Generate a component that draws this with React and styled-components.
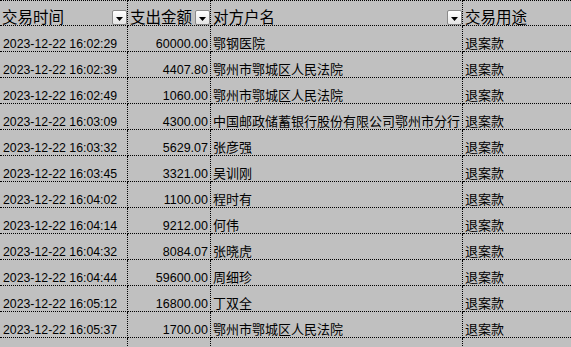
import React from "react";
import styled, {createGlobalStyle} from "styled-components";

const rows = [
  ["2023-12-22 16:02:29", "60000.00", "鄂钢医院", "退案款"],
  ["2023-12-22 16:02:39", "4407.80", "鄂州市鄂城区人民法院", "退案款"],
  ["2023-12-22 16:02:49", "1060.00", "鄂州市鄂城区人民法院", "退案款"],
  ["2023-12-22 16:03:09", "4300.00", "中国邮政储蓄银行股份有限公司鄂州市分行", "退案款"],
  ["2023-12-22 16:03:32", "5629.07", "张彦强", "退案款"],
  ["2023-12-22 16:03:45", "3321.00", "吴训刚", "退案款"],
  ["2023-12-22 16:04:02", "1100.00", "程时有", "退案款"],
  ["2023-12-22 16:04:14", "9212.00", "何伟", "退案款"],
  ["2023-12-22 16:04:32", "8084.07", "张晓虎", "退案款"],
  ["2023-12-22 16:04:44", "59600.00", "周细珍", "退案款"],
  ["2023-12-22 16:05:12", "16800.00", "丁双全", "退案款"],
  ["2023-12-22 16:05:37", "1700.00", "鄂州市鄂城区人民法院", "退案款"],
  ["", "", "", ""],
];

const headers = [
  {title: "交易时间", filter: true},
  {title: "支出金额", filter: true},
  {title: "对方户名", filter: true},
  {title: "交易用途", filter: false},
];

// font per column: digits are smaller than the CJK text
const columns = [
  {size: "12.3px", align: "flex-start"},
  {size: "12.5px", align: "flex-end"},
  {size: "13px", align: "flex-start", cjk: true},
  {size: "13px", align: "flex-start", cjk: true},
];

const FilterIcon = () => (
  <svg width="7" height="4" viewBox="0 0 7 4">
    <polygon points="0,0 7,0 3.5,4" fill="#000"/>
  </svg>
);

export default function App() {
  return (
    <>
      <GlobalStyle/>
      <Sheet>
        {headers.map((h, i) => (
          <HeaderCell key={i} $last={i === 3}>
            <HeaderText>{h.title}</HeaderText>
            {h.filter && (
              <FilterButton>
                <FilterIcon/>
              </FilterButton>
            )}
          </HeaderCell>
        ))}
        {rows.map((row, r) =>
          row.map((value, c) => (
            <Cell
              key={r + "-" + c}
              $size={columns[c].size}
              $align={columns[c].align}
              $cjk={columns[c].cjk}
              $last={c === 3}
            >
              {value}
            </Cell>
          ))
        )}
      </Sheet>
    </>
  );
}

const GlobalStyle = createGlobalStyle`
  html, body {
    margin: 0;
    padding: 0;
    background: #c0c0c0;
    overflow: hidden;
  }
  * {
    box-sizing: border-box;
  }
`;

const Sheet = styled.div`
  display: grid;
  grid-template-columns: 128px 83px 252px 1fr;
  width: 571px;
  background: #c0c0c0;
  color: #000;
  font-family: "Liberation Sans", "Noto Sans CJK SC", sans-serif;
`;

const HeaderCell = styled.div`
  display: flex;
  align-items: flex-end;
  height: 26px;
  padding-left: 2px;
  border-top: 1px dotted #000;
  border-bottom: 1px dotted #000;
  border-right: ${(p) => (p.$last ? "none" : "1px dotted #000")};
`;

const HeaderText = styled.span`
  font-family: "Noto Sans CJK SC", sans-serif;
  font-size: 15.5px;
  line-height: 16px;
  padding-bottom: 1px;
  white-space: nowrap;
`;

const FilterButton = styled.div`
  margin-left: auto;
  width: 15px;
  height: 15px;
  display: flex;
  align-items: center;
  justify-content: center;
  padding-top: 2px;
  border: 1px solid #8a8a8a;
  border-radius: 2px;
  background: linear-gradient(#ffffff, #e4e4e4);
`;

const Cell = styled.div`
  display: flex;
  align-items: flex-end;
  justify-content: ${(p) => p.$align};
  height: 26px;
  padding: 0 2px ${(p) => (p.$cjk ? "1px" : "0")} ${(p) => (p.$cjk ? "2px" : "3px")};
  border-bottom: 1px dotted #000;
  border-right: ${(p) => (p.$last ? "none" : "1px dotted #000")};
  font-family: ${(p) =>
    p.$cjk ? `"Noto Sans CJK SC", sans-serif` : `"Liberation Sans", sans-serif`};
  font-size: ${(p) => p.$size};
  line-height: 14px;
  white-space: nowrap;
  overflow: hidden;
`;
